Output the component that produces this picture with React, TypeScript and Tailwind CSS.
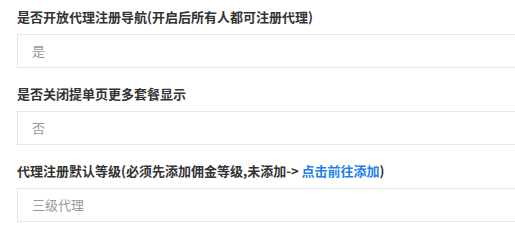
const fields = [
  { label: "是否开放代理注册导航(开启后所有人都可注册代理)", value: "是" },
  { label: "是否关闭提单页更多套餐显示", value: "否" },
  { label: "代理注册默认等级(必须先添加佣金等级,未添加-> ", link: "点击前往添加", value: "三级代理" },
];

const App = () => {
  return (
    <div
      className="w-[515px] h-[229px] overflow-hidden bg-white pt-[7px] pl-[17px]"
      style={{ fontFamily: '"Noto Sans CJK SC", "Noto Sans", sans-serif' }}
    >
      {fields.map((f, i) => (
        <div key={i} className="mb-4">
          <div className="h-5 leading-5 text-[13px] font-bold text-[#333] whitespace-nowrap">
            {f.label}
            {f.link && (
              <>
                <a className="text-[#1e80e8] cursor-pointer">{f.link}</a>)
              </>
            )}
          </div>
          <div className="mt-[7px] h-[34px] w-[520px] border border-[#e6e6e6] flex items-center pl-[14px] text-[13px] text-[#999]">
            {f.value}
          </div>
        </div>
      ))}
    </div>
  );
};

export default App;
